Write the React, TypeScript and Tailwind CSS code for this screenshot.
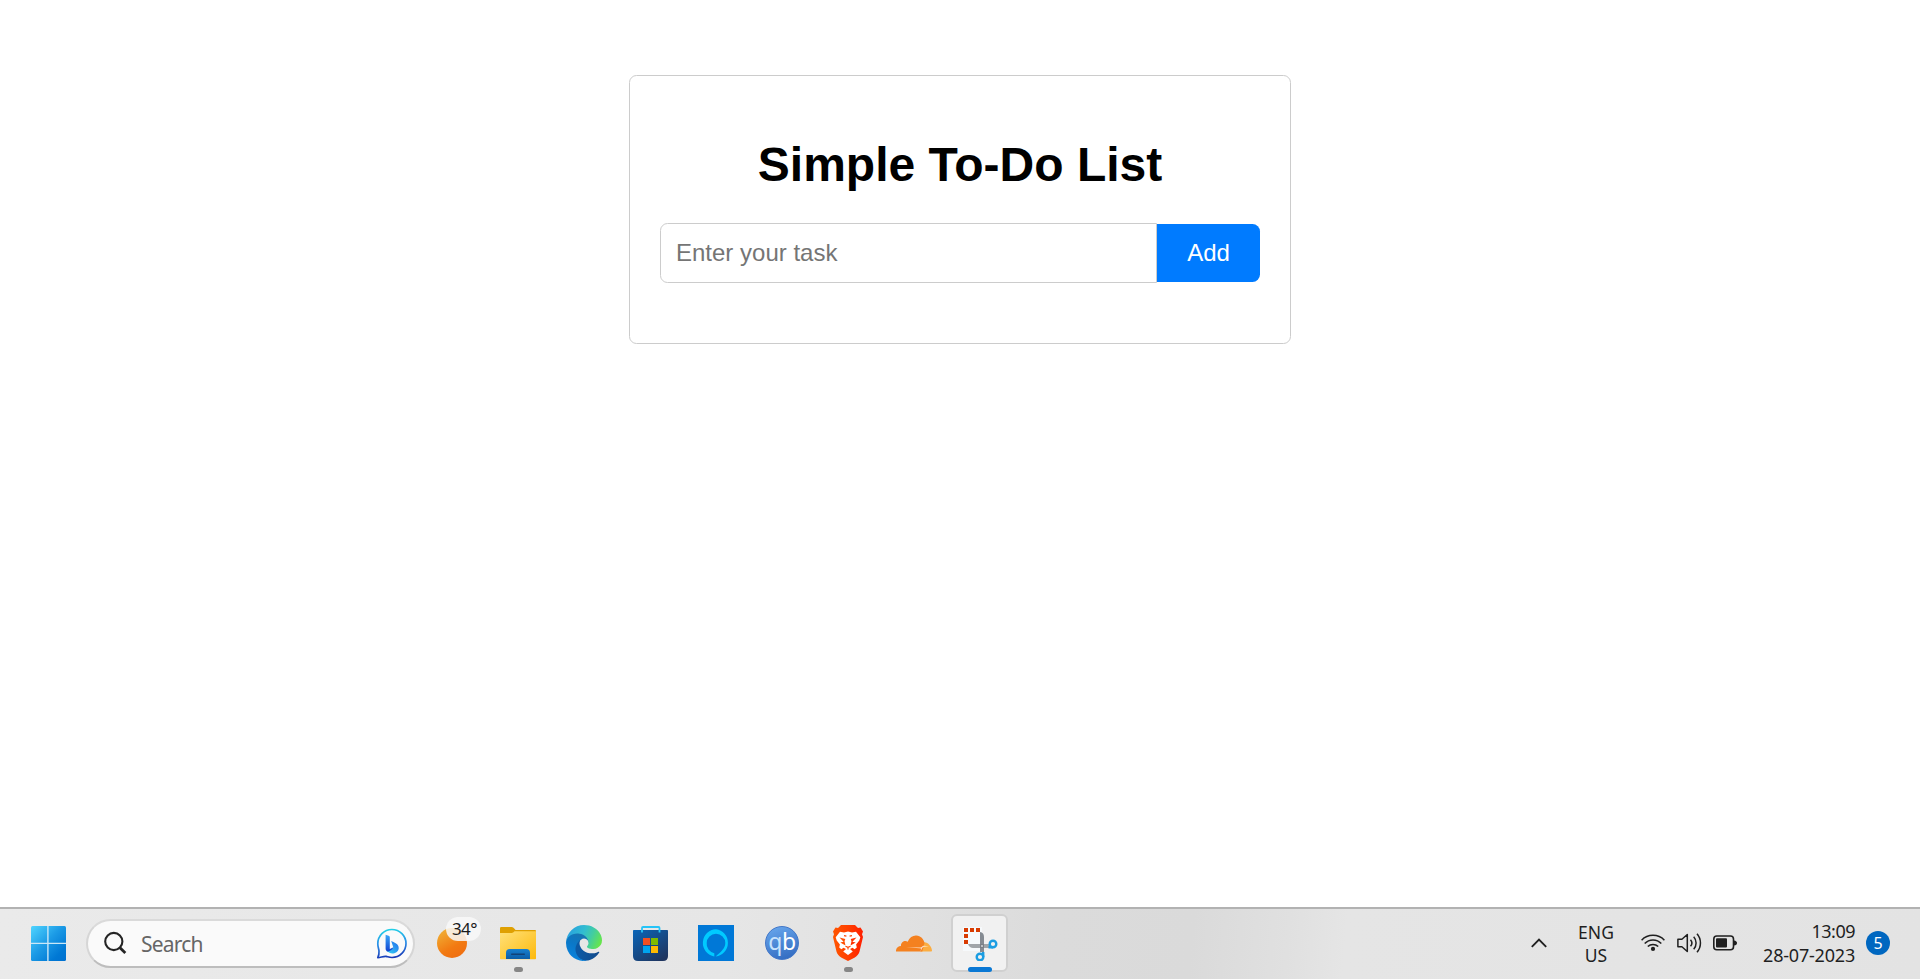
import React from "react";

function WindowsLogo() {
  return (
    <svg className="block" width="35" height="35" viewBox="0 0 35 35">
      <defs>
        <linearGradient id="win" x1="0" y1="0" x2="1" y2="1">
          <stop offset="0" stopColor="#50d5ff" />
          <stop offset="0.45" stopColor="#1c9be6" />
          <stop offset="0.8" stopColor="#0078d4" />
          <stop offset="1" stopColor="#0070d0" />
        </linearGradient>
      </defs>
      <rect width="35" height="35" rx="1.5" fill="url(#win)" />
      <path d="M16.9 0v35M0 17.4h35" stroke="#c9e7f7" strokeWidth="1.4" />
    </svg>
  );
}

function SearchIcon() {
  return (
    <svg className="block" width="24" height="24" viewBox="0 0 24 24" fill="none" stroke="#242424" strokeWidth="2.1">
      <circle cx="10.8" cy="10.5" r="8.6" />
      <path d="M17 16.7l5.3 5.3" strokeWidth="2.8" />
    </svg>
  );
}

function BingIcon() {
  return (
    <svg className="block" width="31" height="31" viewBox="0 0 31 31" fill="none">
      <defs>
        <linearGradient id="bingRing" x1="0.4" y1="0" x2="0.5" y2="1">
          <stop offset="0" stopColor="#22cfe6" />
          <stop offset="0.5" stopColor="#2a8fe8" />
          <stop offset="1" stopColor="#1837b5" />
        </linearGradient>
        <linearGradient id="bingStem" x1="0" y1="0" x2="0" y2="1">
          <stop offset="0" stopColor="#38a6fa" />
          <stop offset="1" stopColor="#1243d0" />
        </linearGradient>
        <linearGradient id="bingBowl" x1="1" y1="0" x2="0" y2="1">
          <stop offset="0" stopColor="#2169ec" />
          <stop offset="1" stopColor="#35d5f5" />
        </linearGradient>
      </defs>
      <path d="M1.8 29.7c.9-2 1.4-4.2 1.2-6.700-.1-2-1.200-3.900-1.200-7.300C1.800 7.800 8 1.500 15.900 1.500S30 7.800 30 15.500 23.700 29.500 16 29.500c-2.400 0-4-.7-5.800-1.100-2.500-.4-5.300 1-8.400 1.300z" stroke="url(#bingRing)" strokeWidth="1.7" strokeLinejoin="round" />
      <path d="M15.200 13c2.400 1.200 8 2.700 7.500 7.400-.5 4.300-5.300 5.700-8.700 4.700l-3.500-2 7-3.200z" fill="url(#bingBowl)" />
      <path d="M9.600 6.800l3 .9c1 .3 1.200.8 1.200 1.700v11.700l4.200-2c-1.700 2.500-4.200 4.600-6.200 4.300-1.300-.2-2.200-1.200-2.200-2.700z" fill="url(#bingStem)" />
    </svg>
  );
}

function FolderIcon() {
  return (
    <svg className="block" width="36" height="36" viewBox="0 0 36 36">
      <defs>
        <linearGradient id="folder" x1="0" y1="0" x2="1" y2="1">
          <stop offset="0" stopColor="#ffe17a" />
          <stop offset="1" stopColor="#fdb90b" />
        </linearGradient>
        <linearGradient id="tray" x1="0" y1="0" x2="0" y2="1">
          <stop offset="0" stopColor="#1680cf" />
          <stop offset="1" stopColor="#0c5da5" />
        </linearGradient>
      </defs>
      <path d="M0 3.200Q0 2 1.200 2h10.500q1 0 1.800.8L15.600 5H35q1 0 1 1v12H0z" fill="#dfa002" />
      <path d="M0 8h11.500q1.200 0 2-.8l1-1H36v27.300q0 .7-.7.7H.7q-.7 0-.7-.7z" fill="url(#folder)" />
      <path d="M6 34v-6.300Q6 24 9.700 24h16.600Q30 24 30 27.700V34z" fill="url(#tray)" />
      <rect x="11" y="28.500" width="14" height="1.500" rx=".7" fill="#114277" />
    </svg>
  );
}

function EdgeIcon() {
  return (
    <svg className="block" width="36" height="36" viewBox="0 0 256 256">
      <defs>
        <linearGradient id="edgeA" x1="0.2" y1="0.500" x2="1" y2="0.600">
          <stop offset="0" stopColor="#0c59a4" />
          <stop offset="1" stopColor="#114a8b" />
        </linearGradient>
        <linearGradient id="edgeB" x1="0.700" y1="0" x2="0.300" y2="1">
          <stop offset="0" stopColor="#1b73ad" />
          <stop offset="0.500" stopColor="#0a78c8" />
          <stop offset="1" stopColor="#0a84df" />
        </linearGradient>
        <linearGradient id="edgeC" x1="0" y1="0.300" x2="1" y2="0.600">
          <stop offset="0" stopColor="#289fe0" />
          <stop offset="0.450" stopColor="#32bdd0" />
          <stop offset="0.700" stopColor="#43cda0" />
          <stop offset="1" stopColor="#66e54c" />
        </linearGradient>
      </defs>
      <path fill="url(#edgeA)" d="M231 190.500c-3.400 1.800-6.900 3.400-10.500 4.700a101.700 101.700 0 0 1-35.900 6.400c-47.300 0-88.500-32.500-88.500-74.300a31.500 31.500 0 0 1 16.400-27.300c-42.800 1.800-53.800 46.400-53.800 72.500 0 74 68.100 81.400 82.800 81.400 7.900 0 19.800-2.300 27-4.600l1.300-.4a128.300 128.300 0 0 0 66.600-52.800 4 4 0 0 0-5.400-5.600z" />
      <path fill="url(#edgeB)" d="M105.700 241.400a79.200 79.200 0 0 1-22.700-21.300 80.700 80.700 0 0 1 29.500-120c3.200-1.500 8.500-4.100 15.600-4a32.400 32.400 0 0 1 25.700 13 31.900 31.900 0 0 1 6.300 18.700c0-.2 24.500-79.600-80-79.600C36.200 48.200.1 89.800.1 126.400a130.200 130.200 0 0 0 12.100 56 128 128 0 0 0 156.400 67 75.500 75.500 0 0 1-62.900-8z" />
      <path fill="url(#edgeC)" d="M152.300 148.900c-.8 1-3.300 2.500-3.300 5.600 0 2.600 1.700 5.100 4.700 7.300 14.400 10 41.500 8.600 41.600 8.600a59.600 59.600 0 0 0 30.300-8.400A61.400 61.400 0 0 0 256 109.100c.3-22.400-8-37.300-11.300-43.900C223.500 23.900 177.800 0 128 0A128 128 0 0 0 0 126.300c.5-36.600 36.800-66.100 80-66.100 3.500 0 23.500.3 42 10 16.300 8.600 24.900 19 30.800 29.200 6.100 10.700 7.200 24.200 7.200 29.600 0 5.300-2.700 13.300-7.700 19.900z" />
    </svg>
  );
}

function StoreIcon() {
  return (
    <svg className="block" width="35" height="36" viewBox="0 0 35 36">
      <defs>
        <linearGradient id="store" x1="0" y1="0" x2="0.800" y2="1">
          <stop offset="0" stopColor="#0a65b8" />
          <stop offset="1" stopColor="#1f355f" />
        </linearGradient>
      </defs>
      <path d="M0 5.700Q0 5 .7 5h33.600q.7 0 .7.7V31q0 5-5 5H5q-5 0-5-5z" fill="url(#store)" />
      <path d="M9 7.500V3q0-1 1-1h15.500q1 0 1 1v4.500" fill="none" stroke="#25c4f8" strokeWidth="1.800" />
      <path d="M10 13h7v7h-7z" fill="#f25022" />
      <path d="M18 13h7v7h-7z" fill="#7fba00" />
      <path d="M10 21h7v7h-7z" fill="#00a4ef" />
      <path d="M18 21h7v7h-7z" fill="#ffb900" />
    </svg>
  );
}

function AlexaIcon() {
  return (
    <svg className="block" width="36" height="36" viewBox="0 0 36 36">
      <path d="M0 0h36v36H0z" fill="#0078d7" />
      <path d="M18 4.200a13.700 13.700 0 0 0-1.700 27.200v-3.200A9.300 9.300 0 0 1 8.700 18a9.300 9.300 0 0 1 18.600 0c0 5.400-4.500 9-9.600 13.400A13.700 13.700 0 0 0 18 4.200z" fill="#00caff" />
    </svg>
  );
}

function BraveIcon() {
  return (
    <svg className="block" width="36" height="36" viewBox="0 0 36 36">
      <defs>
        <linearGradient id="brave" x1="0" y1="0" x2="1" y2="0">
          <stop offset="0" stopColor="#ff5601" />
          <stop offset="0.500" stopColor="#ff4000" />
          <stop offset="1" stopColor="#ff1f01" />
        </linearGradient>
      </defs>
      <path d="M11 0h14l3 3 2.500-.4L33 6.500l-1 2.800 1 2.700-3.600 15c-.6 2.300-2.400 4-5 5.700L18 36l-6.400-3.300c-2.600-1.700-4.400-3.400-5-5.700L3 12l1-2.700-1-2.800 2.500-3.900L8 3z" fill="url(#brave)" />
      <path d="M10 6.700l4 .9 4-1 4 1 4-.9 4.300 5.600-1 3.200-3.200 4 .7 3-2.200 1.800-2.100-1.600-2.500 1.400 2.800 2.500L18 30l-4.800-3.400 2.800-2.500-2.500-1.400-2.100 1.600-2.200-1.800.7-3-3.200-4-1-3.200z" fill="#fff" />
      <path d="M9.500 12.400l5.800 1.500-.8 2.400 1 4.200-5.200-3 3.300-.7z" fill="#ff4d01" />
      <path d="M26.500 12.400l-5.800 1.500.8 2.400-1 4.200 5.200-3-3.300-.7z" fill="#ff3001" />
      <path d="M14 10.600l2.400.5M22 10.600l-2.400.5M15.500 21.200L18 22.300l2.500-1.100M18 22v2.500" fill="none" stroke="#ff4000" strokeWidth="1.100" />
    </svg>
  );
}

function CloudflareIcon() {
  return (
    <svg className="block" width="36" height="17" viewBox="0 0 36 17">
      <path d="M24.500 16.500c2-5 2.500-9.500 4-9.300 3.600.1 7.200 4.200 7.500 8.300 0 .7-.3 1-.8 1z" fill="#fbad41" />
      <path d="M0 16.500c-.4-3 1.900-5.400 5-5.500-.5-3.700 3.700-6.300 6.700-4.300C13.500 2.500 16.800.4 20.300.6c4.400.2 7.500 3.500 8.200 7.400l-2.200 8.500z" fill="#f48120" />
      <path d="M10 12.200l14.500.3c1.200 0 1.600-1.800 3.400-1.800l5 .5-5.200.6c-1.200.4-1.600 1.300-2 2.200l-1.200 2.500.5-2.300c.1-.7-.5-.9-1.300-.9z" fill="#fff" fillOpacity=".75" />
    </svg>
  );
}

function SnipIcon() {
  return (
    <svg className="block" width="36" height="36" viewBox="0 0 36 36">
      <path d="M1 2h19v24H1z" fill="#f6f9fb" />
      <path d="M2 3h4v4H2zM8 3h4v4H8zM14 3h4v4h-4zM2 9h4v4H2zM2 15h4v4H2z" fill="#d83b01" />
      <path d="M18 7q4 .5 4 5v15h-4z" fill="#858b92" />
      <path d="M6 19h21v4H11q-3.500 0-5-4z" fill="#a1a5a9" />
      <path d="M18 19h4v4h-4z" fill="#7a7f86" />
      <circle cx="20" cy="21" r="1" fill="#d4d7da" />
      <g fill="none" stroke="#1b9de2" strokeWidth="2.400">
        <circle cx="31" cy="19" r="3.300" />
        <circle cx="18" cy="32" r="3.300" />
        <path d="M26.500 22.300H31M21.200 32v-5" />
      </g>
    </svg>
  );
}

function ChevronIcon() {
  return (
    <svg className="block" width="16" height="10" viewBox="0 0 16 10" fill="none" stroke="#1f1f1f" strokeWidth="1.900">
      <path d="M.8 8.800L8 1.600l7.200 7.200" />
    </svg>
  );
}

function WifiIcon() {
  return (
    <svg className="block" width="24" height="18" viewBox="0 0 24 18" fill="none" stroke="#1f1f1f" strokeWidth="1.500">
      <path d="M.6 6.200a15.800 15.800 0 0 1 22.800 0M3.700 9.600a11.300 11.300 0 0 1 16.600 0M6.800 12.600a7.200 7.200 0 0 1 10.400 0" />
      <circle cx="12" cy="14.900" r="2.100" fill="#1f1f1f" stroke="none" />
    </svg>
  );
}

function SpeakerIcon() {
  return (
    <svg className="block" width="26" height="20" viewBox="0 0 26 20" fill="none" stroke="#1f1f1f" strokeWidth="1.500" strokeLinejoin="round">
      <path d="M.9 6.200h4L10.300 1.500v17L4.900 13.800h-4z" />
      <path d="M13.500 6.700a5 5 0 0 1 0 6.600M16.700 3.700a9.500 9.500 0 0 1 0 12.600M20 .8a14 14 0 0 1 0 18.400" />
    </svg>
  );
}

function BatteryIcon() {
  return (
    <svg className="block" width="24" height="16" viewBox="0 0 24 16">
      <rect x=".8" y="1" width="19.700" height="13.800" rx="3" fill="none" stroke="#1f1f1f" strokeWidth="1.600" />
      <rect x="3" y="3.300" width="11" height="9.300" rx="1" fill="#1f1f1f" />
      <path d="M21 5.500q3 .5 3 2.500t-3 2.500z" fill="#1f1f1f" />
    </svg>
  );
}

function AppButton({ children, open = false }: { children: React.ReactNode; open?: boolean }) {
  return (
    <button className="relative flex h-[68px] w-[66px] shrink-0 items-center justify-center">
      {children}
      {open && <span className="absolute bottom-[5px] left-[28.500px] h-[5px] w-[9px] rounded-full bg-[#868686]" />}
    </button>
  );
}

function TodoCard() {
  return (
    <main className="mx-auto mt-[75px] h-[269px] w-[662px] rounded-[7.500px] border border-[#ccc] px-[30px] pt-[61px]">
      <h1 className="text-center text-[48px] leading-[56px] font-bold whitespace-nowrap text-black">Simple To-Do List</h1>
      <form className="mt-[30px] flex items-center">
        <input
          className="h-[60px] w-[497px] rounded-l-[7.500px] border border-[#ccc] px-[15px] text-[24px] placeholder:text-[#757575]"
          placeholder="Enter your task"
        />
        <button type="button" className="h-[58px] w-[103px] rounded-r-[7.500px] bg-[#007bff] text-center text-[24px] text-white">
          Add
        </button>
      </form>
    </main>
  );
}

function Taskbar() {
  return (
    <footer className="h-[72px] border-t-2 border-[#b2b2b2] bg-[linear-gradient(95deg,#eaeaea_0%,#e6e6e6_38%,#e1e1e1_47%,#dbdbdb_55%,#dadada_62%,#e0e0e0_67%,#e5e5e5_70%,#e3e3e3_100%)] font-['Noto_Sans',sans-serif] text-[#1f1f1f]">
      <div className="flex h-[68px] items-center">
        <button className="ml-[31px] shrink-0">
          <WindowsLogo />
        </button>
        <div className="ml-[20px] flex h-[49px] w-[329px] shrink-0 items-center rounded-full border-2 border-t-[#dadada] border-r-[#d6d6d6] border-b-[#bdbdbd] border-l-[#d6d6d6] bg-[#fafafa] pl-[15px]">
          <SearchIcon />
          <span className="ml-[14px] w-[235px] pt-px text-[21px] leading-[24px] tracking-[-0.800px] text-[#666]">Search</span>
          <BingIcon />
        </div>
        <div className="relative ml-[22px] h-[30px] w-[30px] shrink-0 rounded-full bg-[linear-gradient(150deg,#f0b83a,#f27a12_60%,#ee6a10)]">
          <span className="absolute -top-[11px] left-[9px] flex h-[24px] w-[35px] items-center justify-center rounded-full bg-[#f8f8f8]/85 pl-[2px] text-[17px] tracking-[-0.500px] text-[#1b1b1b]">
            34°
          </span>
        </div>
        <nav className="ml-[18px] flex items-center">
          <AppButton open><FolderIcon /></AppButton>
          <AppButton><EdgeIcon /></AppButton>
          <AppButton><StoreIcon /></AppButton>
          <AppButton><AlexaIcon /></AppButton>
          <AppButton>
            <span className="flex h-[34px] w-[34px] items-center justify-center rounded-full border border-[#4176c8] bg-[linear-gradient(160deg,#6aa9ee,#2e66bd)] pb-[3px] text-[23px] leading-none tracking-[-0.500px] text-white">
              <span className="text-[#c8e3fc]">q</span>b
            </span>
          </AppButton>
          <AppButton open><BraveIcon /></AppButton>
          <AppButton><CloudflareIcon /></AppButton>
          <button className="relative ml-[4px] flex h-[58px] w-[57px] items-center justify-center rounded-[6px] border-2 border-[#d0d0d0] bg-[#f1f1f1]">
            <SnipIcon />
            <span className="absolute -bottom-[2px] left-[15px] h-[5px] w-[24px] rounded-full bg-[#0a78d4]" />
          </button>
        </nav>
        <div className="ml-auto flex items-center">
          <ChevronIcon />
          <div className="ml-[25px] w-[48px] text-center text-[17.500px] leading-[23px]">
            <div className="pt-px">ENG</div>
            <div>US</div>
          </div>
          <div className="ml-[21px] flex items-center gap-[12px]">
            <WifiIcon />
            <SpeakerIcon />
            <div className="-ml-[2px]">
              <BatteryIcon />
            </div>
          </div>
          <div className="ml-[18px] w-[100px] text-right text-[18px] leading-[24px] whitespace-nowrap">
            <div className="tracking-[-0.500px]">13:09</div>
            <div className="tracking-[-0.200px]">28-07-2023</div>
          </div>
          <span className="mr-[30px] ml-[11px] flex h-[24px] w-[24px] items-center justify-center rounded-full bg-[#0067c0] text-[16px] leading-none text-white">
            5
          </span>
        </div>
      </div>
    </footer>
  );
}

export default function App() {
  return (
    <div className="flex h-[979px] w-[1920px] flex-col overflow-hidden bg-white font-['Liberation_Sans',Arial,sans-serif]">
      <TodoCard />
      <div className="grow" />
      <Taskbar />
    </div>
  );
}
